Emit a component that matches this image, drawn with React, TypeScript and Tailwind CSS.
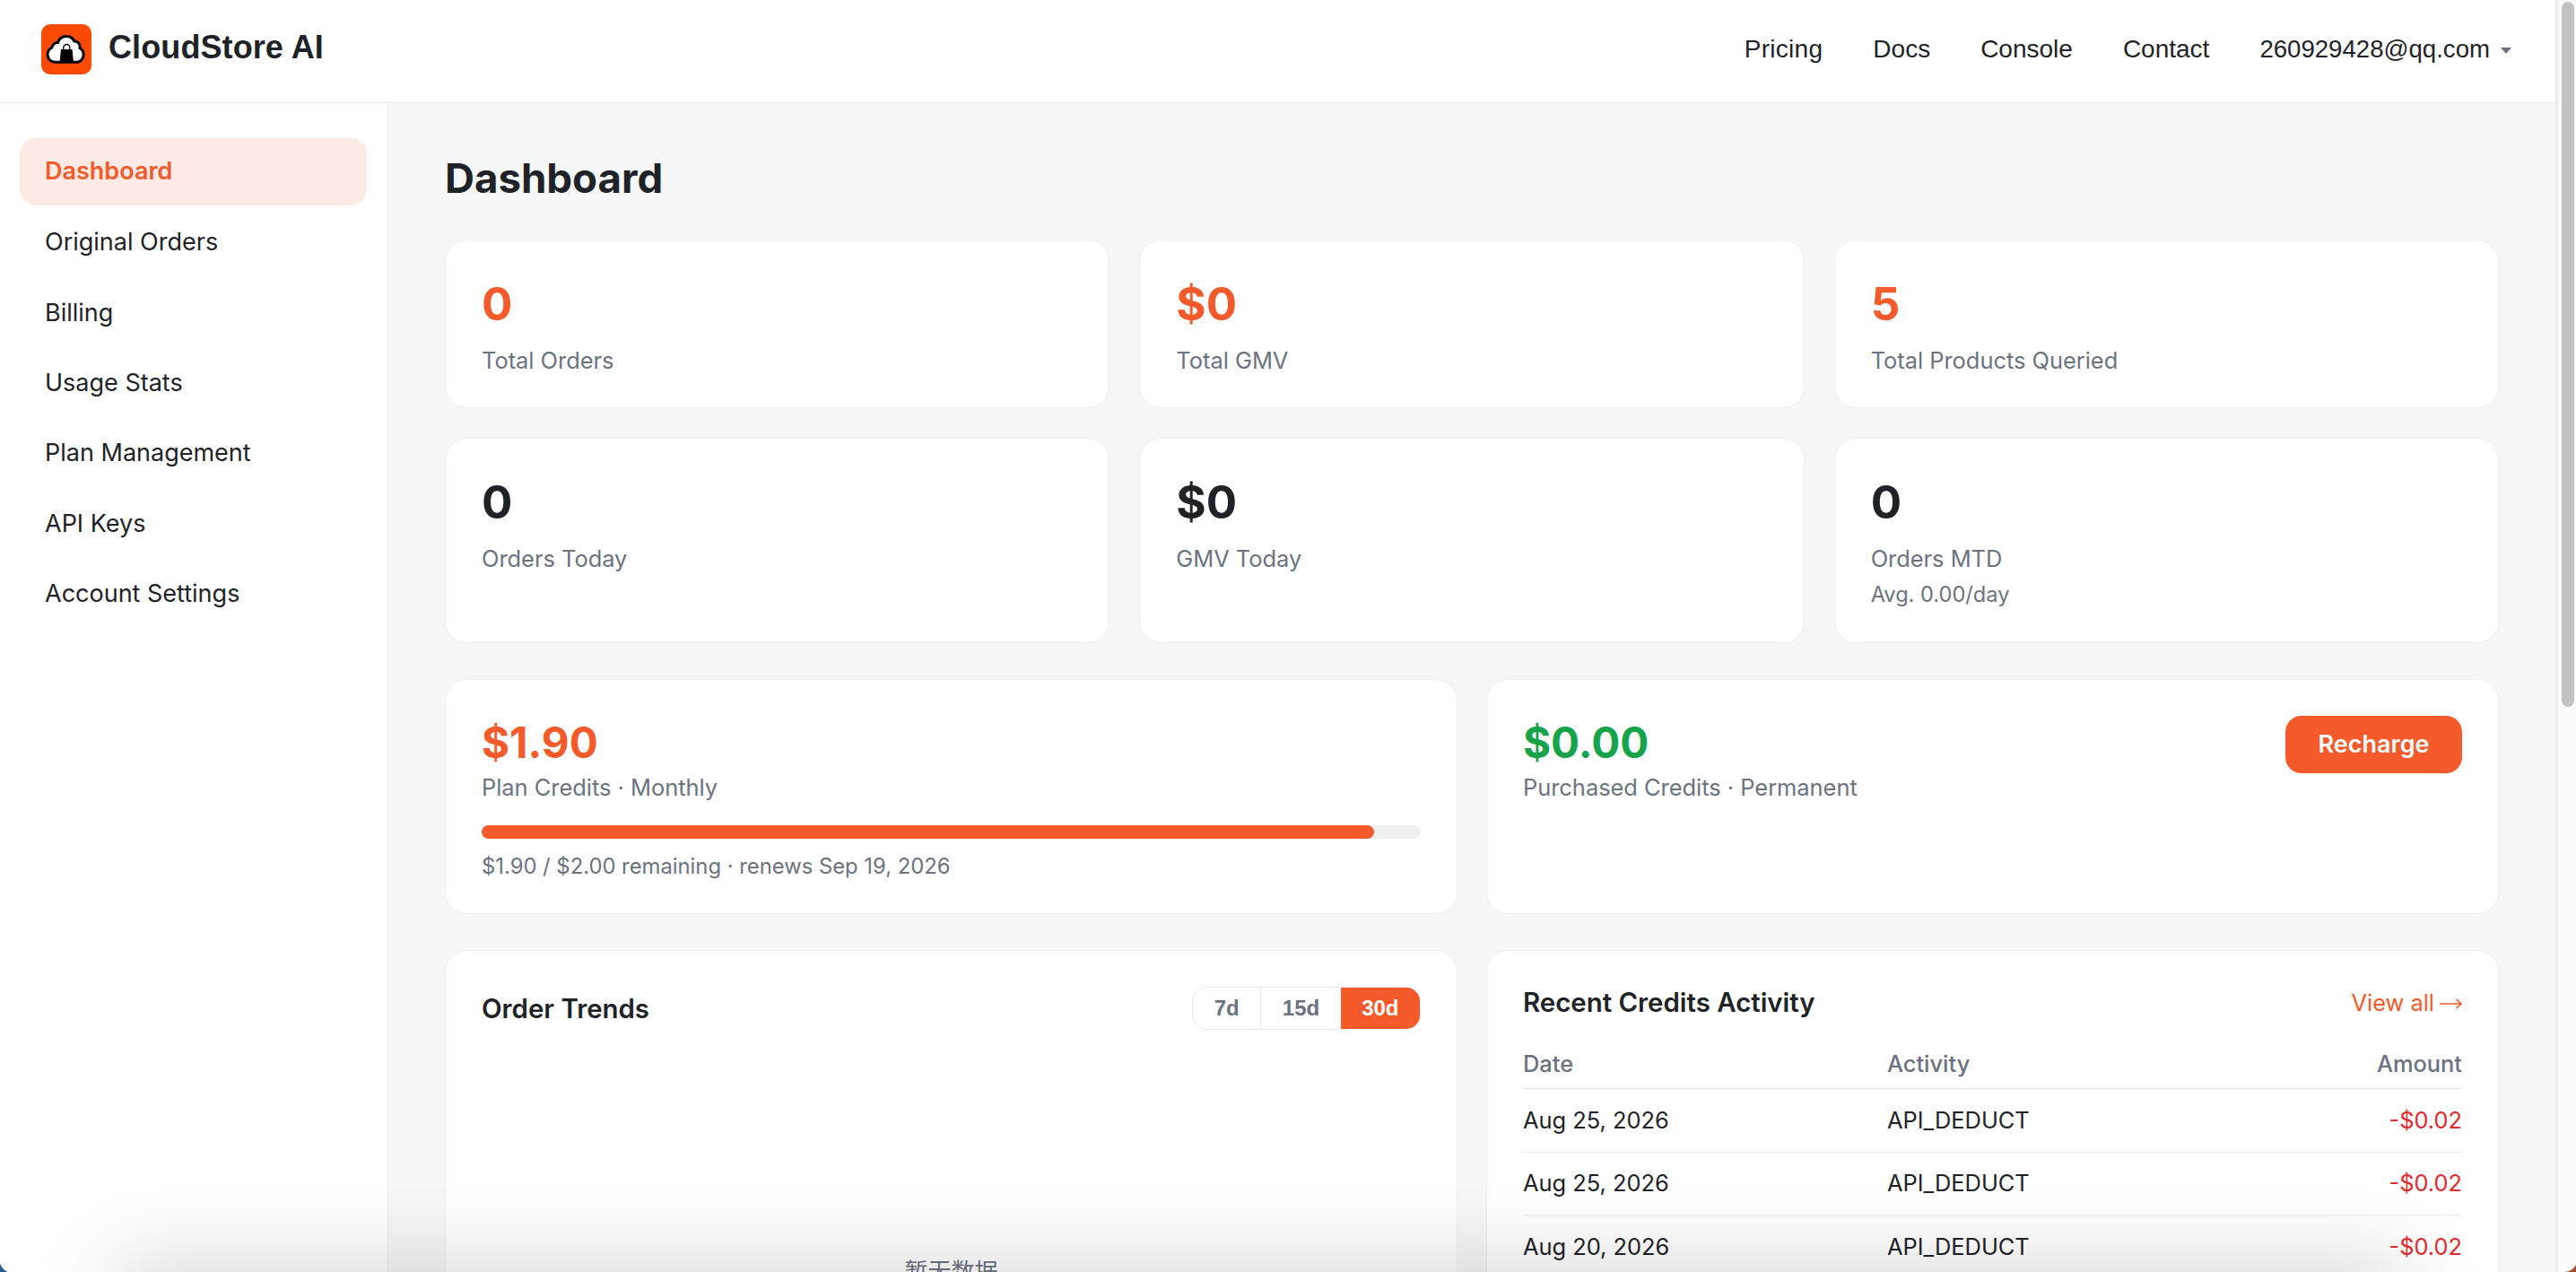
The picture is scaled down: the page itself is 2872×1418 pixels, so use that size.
const navItems = ["Dashboard", "Original Orders", "Billing", "Usage Stats", "Plan Management", "API Keys", "Account Settings"];

const activity = [
  { date: "Aug 25, 2026", type: "API_DEDUCT", amount: "-$0.02" },
  { date: "Aug 25, 2026", type: "API_DEDUCT", amount: "-$0.02" },
  { date: "Aug 20, 2026", type: "API_DEDUCT", amount: "-$0.02" },
];

function Logo() {
  return (
    <svg viewBox="0 0 56 56" className="h-[56px] w-[56px] shrink-0">
      <rect width="56" height="56" rx="10" fill="#fb4a06" />
      <path
        d="M15 42.3A8.7 8.7 0 0 1 12 25.8A6 6 0 0 1 18.5 20.5A10 10 0 0 1 37 19A6 6 0 0 1 43 26.5A8.7 8.7 0 0 1 40.5 42.3Z"
        fill="#fff"
        stroke="#000"
        strokeWidth="3"
      />
      <path d="M22 28H34.5L36 43H20.5Z" fill="#000" />
      <path d="M24.8 30V26A3.5 3.5 0 0 1 31.8 26V30" fill="none" stroke="#000" strokeWidth="1.3" />
    </svg>
  );
}

function Card({ children }: { children: React.ReactNode }) {
  return <div className="rounded-[24px] border border-[#eceef1] bg-white p-[40px]">{children}</div>;
}

function Stat({ value, label, sub, accent }: { value: string; label: string; sub?: string; accent?: boolean }) {
  return (
    <Card>
      <div className={accent ? "mt-[2px] text-[51px] leading-[58px] font-bold text-[#f55a2b]" : "mt-[2px] text-[51px] leading-[58px] font-bold text-[#1f2328]"}>
        {value}
      </div>
      <div className="mt-[20px] -mb-[2px] text-[25.4px] leading-[28px] text-[#6b7280]">{label}</div>
      {sub && <div className="mt-[15px] text-[23.6px] leading-[26px] text-[#6b7280]">{sub}</div>}
    </Card>
  );
}

export default function App() {
  return (
    <div className="relative flex h-[1418px] w-full overflow-hidden bg-white font-['Inter',sans-serif] text-[#1f2328]">
      <div className="flex min-w-0 flex-1 flex-col">
        {/* Top bar */}
        <header className="flex h-[115px] shrink-0 items-center justify-between border-b border-[#e9eaed] pr-[49px] pb-[4px] pl-[46px] font-['Liberation_Sans',sans-serif]">
          <div className="flex items-center gap-[19px]">
            <Logo />
            <span className="pb-[4px] text-[36px] font-bold tracking-[0.1px]">CloudStore AI</span>
          </div>
          <nav className="flex items-center gap-[56px] text-[28px]">
            <span className="tracking-[0.3px]">Pricing</span>
            <span>Docs</span>
            <span>Console</span>
            <span>Contact</span>
            <span className="flex items-center gap-[12px] text-[27.6px]">
              260929428@qq.com
              <svg viewBox="0 0 12 7" className="mt-[3px] h-[7px] w-[12px]">
                <path d="M0 0H12L6 7Z" fill="#6b7280" />
              </svg>
            </span>
          </nav>
        </header>

        <div className="flex min-h-0 flex-1">
          {/* Sidebar */}
          <aside className="flex w-[433px] shrink-0 flex-col gap-[3.4px] border-r border-[#e9eaed] pt-[39px] pr-[23px] pl-[22px]">
            {navItems.map((item, i) => (
              <div
                key={item}
                className={
                  i === 0
                    ? "flex h-[75px] items-center rounded-[18px] bg-[#fcebe5] pl-[28px] text-[27px] font-semibold text-[#f55a2b]"
                    : "flex h-[75px] items-center pt-[1px] pl-[28px] text-[27px]"
                }
              >
                {item}
              </div>
            ))}
          </aside>

          {/* Main */}
          <main className="min-w-0 flex-1 bg-[#f6f7f9] px-[63px] pt-[56px]">
            <h1 className="mb-[40px] text-[45.6px] leading-[56px] font-bold">Dashboard</h1>

            <div className="mb-[40px] grid grid-cols-3 gap-x-[33px] gap-y-[33px]">
              <Stat value="0" label="Total Orders" accent />
              <Stat value="$0" label="Total GMV" accent />
              <Stat value="5" label="Total Products Queried" accent />
              <Stat value="0" label="Orders Today" />
              <Stat value="$0" label="GMV Today" />
              <Stat value="0" label="Orders MTD" sub="Avg. 0.00/day" />
            </div>

            <div className="mb-[40px] grid grid-cols-2 gap-x-[32px]">
              <Card>
                <div className="mt-[2px] text-[47.5px] leading-[56px] font-bold text-[#f55a2b]">$1.90</div>
                <div className="mt-[6px] text-[25.4px] leading-[32px] text-[#6b7280]">Plan Credits · Monthly</div>
                <div className="mt-[26px] h-[15px] rounded-full bg-[#eff0f2]">
                  <div className="h-full w-[95%] rounded-full bg-[#f55a2b]" />
                </div>
                <div className="mt-[18px] text-[23.8px] leading-[25px] text-[#6b7280]">
                  $1.90 / $2.00 remaining · renews Sep 19, 2026
                </div>
              </Card>
              <Card>
                <div className="flex items-start justify-between">
                  <div>
                    <div className="mt-[2px] text-[47.5px] leading-[56px] font-bold text-[#16a34a]">$0.00</div>
                    <div className="mt-[6px] text-[25.4px] leading-[32px] text-[#6b7280]">Purchased Credits · Permanent</div>
                  </div>
                  <button className="h-[64px] w-[197px] rounded-[18px] bg-[#f55a2b] text-[27px] font-semibold text-white">
                    Recharge
                  </button>
                </div>
              </Card>
            </div>

            <div className="grid grid-cols-2 gap-x-[32px]">
              <Card>
                <div className="flex items-center justify-between">
                  <h2 className="pt-[2px] text-[29.4px] leading-[36px] font-semibold">Order Trends</h2>
                  <div className="flex h-[48px] overflow-hidden rounded-[16px] border border-[#e9eaed] font-['Liberation_Sans',sans-serif] text-[24px] font-bold text-[#6b7280]">
                    <span className="flex items-center border-r border-[#e9eaed] px-[23.5px]">7d</span>
                    <span className="flex items-center px-[23.5px]">15d</span>
                    <span className="flex items-center bg-[#f55a2b] px-[23.5px] text-white">30d</span>
                  </div>
                </div>
                <div className="mt-[12px] flex h-[514px] items-center justify-center font-['Inter','Noto_Sans_CJK_SC',sans-serif] text-[26px] text-[#6b7280]">
                  暂无数据
                </div>
              </Card>
              <Card>
                <div className="flex items-center justify-between">
                  <h2 className="text-[29.4px] leading-[36px] font-semibold">Recent Credits Activity</h2>
                  <a className="flex items-center gap-[6px] text-[25.4px] leading-[32px] text-[#f55a2b]">
                    View all
                    <svg viewBox="0 0 25 14" className="mt-[2px] h-[14px] w-[25px]">
                      <path d="M0 7H24M18.5 2L24 7L18.5 12" fill="none" stroke="#f55a2b" strokeWidth="1.6" />
                    </svg>
                  </a>
                </div>
                <div className="mt-[24px] grid h-[54px] grid-cols-[406px_1fr_auto] items-center border-b border-[#e9eaed] text-[25.4px] font-medium text-[#6b7280]">
                  <span>Date</span>
                  <span>Activity</span>
                  <span>Amount</span>
                </div>
                {activity.map((row, i) => (
                  <div key={i} className="grid h-[70.6px] grid-cols-[406px_1fr_auto] items-center border-b border-[#eceef1] text-[25.4px]">
                    <span>{row.date}</span>
                    <span>{row.type}</span>
                    <span className="text-[#e42a2e]">{row.amount}</span>
                  </div>
                ))}
              </Card>
            </div>
          </main>
        </div>
      </div>

      {/* Scrollbar */}
      <div className="w-[23px] shrink-0 border-l-[3px] border-[#ececec] bg-[#fafafa] pt-[2px] pl-[4px]">
        <div className="h-[786px] w-[14px] rounded-full bg-[#c2c2c2]" />
      </div>

      {/* Window shadow and corners from the capture */}
      <div className="pointer-events-none absolute right-[190px] -bottom-[40px] left-[130px] h-[40px] shadow-[0_0_90px_0_rgba(0,0,0,0.27)]" />
      <svg viewBox="0 0 10 10" className="absolute bottom-0 left-0 h-[10px] w-[10px]">
        <path d="M0 0C1 4 4 8 9 10H0Z" fill="#245f97" />
      </svg>
      <svg viewBox="0 0 12 8" className="absolute right-0 bottom-0 h-[8px] w-[12px]">
        <path d="M12 0C10 4 6 7 0 8H12Z" fill="#a5502a" />
      </svg>
    </div>
  );
}
